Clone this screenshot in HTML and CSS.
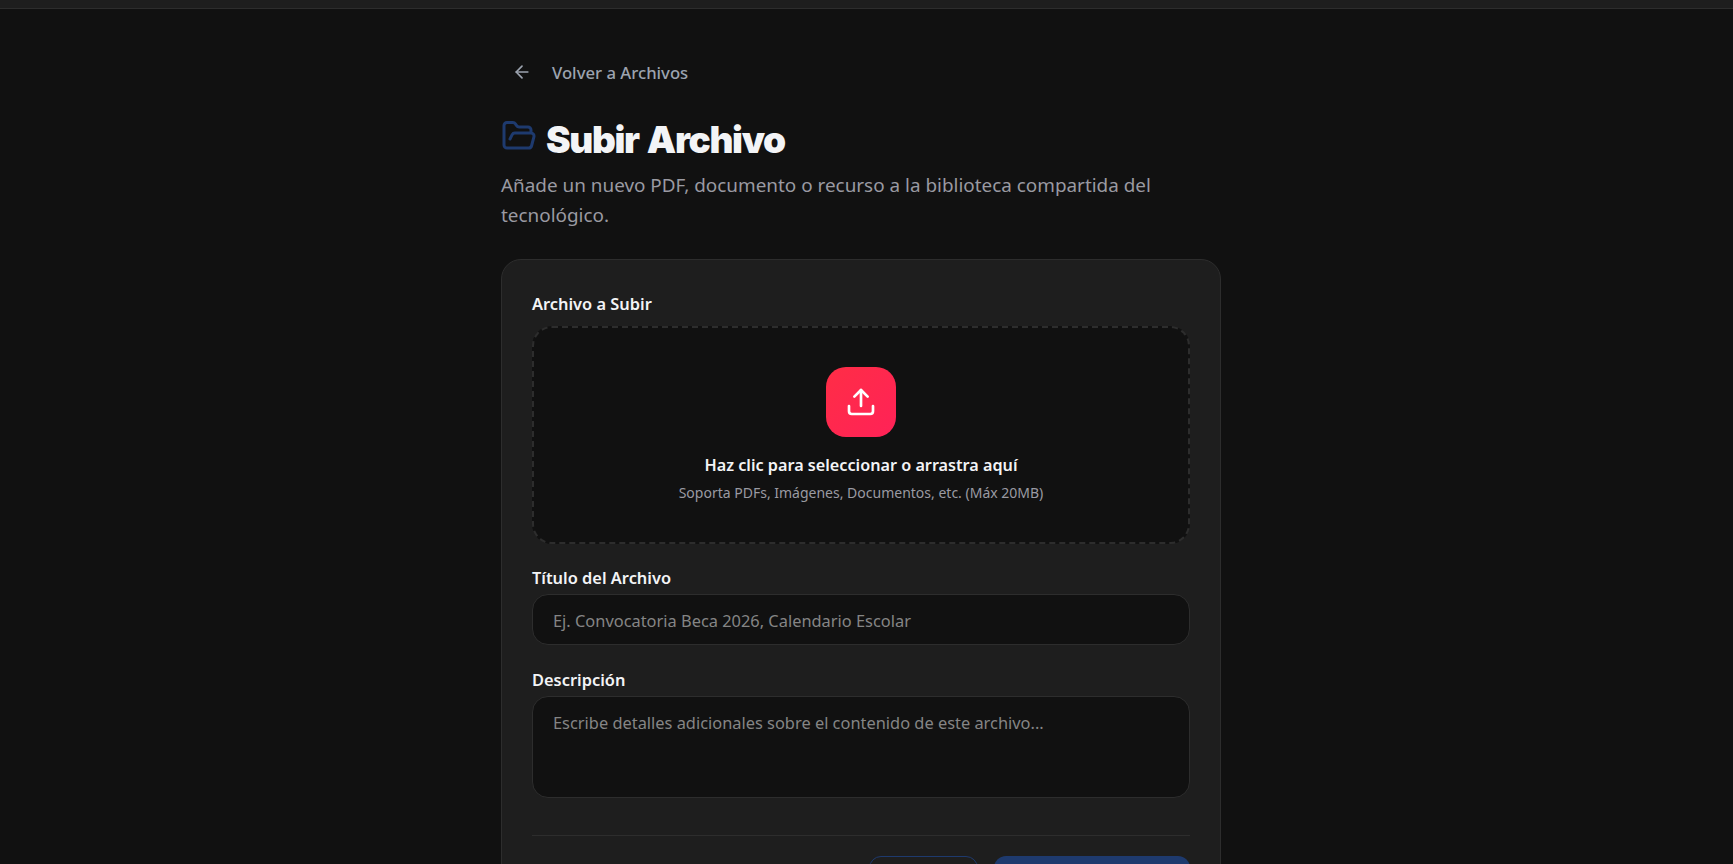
FILE: index.html
```html
<!DOCTYPE html>
<html lang="es">
<head>
<meta charset="utf-8">
<title>Subir Archivo</title>
<link rel="stylesheet" href="styles.css">
</head>
<body>
<div class="topbar"></div>
<main class="page">
  <a class="back" href="#">
    <svg class="back-icon" viewBox="0 0 24 24" fill="none" stroke="currentColor" stroke-width="2" stroke-linecap="round" stroke-linejoin="round"><path d="m12 19-7-7 7-7"/><path d="M19 12H5"/></svg>
    <span>Volver a Archivos</span>
  </a>
  <h1 class="title">
    <svg class="folder" viewBox="0 0 24 24" fill="none" stroke="currentColor" stroke-width="2" stroke-linecap="round" stroke-linejoin="round"><path d="m6 14 1.45-2.9A2 2 0 0 1 9.24 10H20a2 2 0 0 1 1.94 2.5l-1.55 6a2 2 0 0 1-1.94 1.5H4a2 2 0 0 1-2-2V5c0-1.1.9-2 2-2h3.93a2 2 0 0 1 1.66.9l.82 1.2a2 2 0 0 0 1.66.9H18a2 2 0 0 1 2 2v2"/></svg>
    <span>Subir Archivo</span>
  </h1>
  <p class="subtitle">Añade un nuevo PDF, documento o recurso a la biblioteca compartida del tecnológico.</p>
  <form class="card">
    <label class="label label-drop">Archivo a Subir</label>
    <div class="drop">
      <div class="drop-icon">
        <svg viewBox="0 0 24 24" fill="none" stroke="currentColor" stroke-width="2" stroke-linecap="round" stroke-linejoin="round"><path d="M21 15v4a2 2 0 0 1-2 2H5a2 2 0 0 1-2-2v-4"/><polyline points="17 8 12 3 7 8"/><line x1="12" x2="12" y1="3" y2="15"/></svg>
      </div>
      <div class="drop-title">Haz clic para seleccionar o arrastra aquí</div>
      <div class="drop-sub">Soporta PDFs, Imágenes, Documentos, etc. (Máx 20MB)</div>
    </div>
    <label class="label">Título del Archivo</label>
    <input class="field" type="text" placeholder="Ej. Convocatoria Beca 2026, Calendario Escolar">
    <label class="label">Descripción</label>
    <textarea class="field area" placeholder="Escribe detalles adicionales sobre el contenido de este archivo..."></textarea>
    <div class="actions">
      <button class="btn ghost" type="button">Cancelar</button>
      <button class="btn primary" type="button">Subir Archivo</button>
    </div>
  </form>
</main>
</body>
</html>
```
FILE: styles.css
```css
* { box-sizing: border-box; }
body {
  margin: 0;
  height: 864px;
  overflow: hidden;
  background: #111111;
  font-family: "Noto Sans", "Open Sans", sans-serif;
  color: #f3f4f6;
}
.topbar {
  height: 9px;
  background: #1e1e1e;
  border-bottom: 1px solid #2d2d2d;
}
.page {
  width: 720px;
  margin-left: calc(50% - 365.5px);
  padding-top: 47px;
}
.back {
  display: inline-flex;
  align-items: center;
  gap: 20px;
  height: 32px;
  padding-left: 11px;
  color: #9ca3af;
  text-decoration: none;
  font-size: 16.7px;
  font-weight: 500;
}
.back-icon { width: 20px; height: 20px; }
.title {
  display: flex;
  align-items: center;
  gap: 9px;
  margin: 21px 0 0;
  height: 60px;
  font-family: Inter, Roboto, sans-serif;
  font-size: 37px;
  font-weight: 900;
  letter-spacing: -1.35px;
  word-spacing: 2px;
  color: #f3f4f6;
}
.folder { width: 36px; height: 36px; color: #1e3a6e; position: relative; top: -3px; }
.subtitle {
  margin: 1px 0 0;
  font-size: 18.9px;
  line-height: 30px;
  color: #9a9aa2;
}
.card {
  margin-top: 29px;
  background: #1e1e1e;
  border: 1px solid #2d2d2d;
  border-radius: 20px;
  padding: 32px 30px 30px;
  display: flex;
  flex-direction: column;
}
.label {
  font-size: 16.4px;
  font-weight: 600;
  line-height: 24px;
  color: #f3f4f6;
  margin-bottom: 4px;
}
.label-drop { margin-bottom: 10px; }
.drop {
  height: 218px;
  background: #111111;
  border: 2px dashed #2d2d2d;
  border-radius: 20px;
  display: flex;
  flex-direction: column;
  align-items: center;
  margin-bottom: 22px;
}
.drop-icon {
  width: 70px;
  height: 70px;
  margin-top: 39px;
  border-radius: 20px;
  background: linear-gradient(135deg, #ff2d46, #ff2257);
  color: #fff;
  display: flex;
  align-items: center;
  justify-content: center;
}
.drop-icon svg { width: 32px; height: 32px; }
.drop-title { margin-top: 16px; font-size: 16.2px; font-weight: 600; color: #f3f4f6; line-height: 24px; }
.drop-sub { margin-top: 6px; font-size: 14px; color: #9a9aa2; line-height: 20px; }
.field {
  display: block;
  width: 100%;
  height: 51px;
  margin-bottom: 23px;
  padding: 15px 20px 13px;
  background: #111111;
  border: 1px solid #2d2d2d;
  border-radius: 16px;
  color: #f3f4f6;
  font-family: inherit;
  font-size: 16.4px;
  line-height: 22px;
  outline: none;
  resize: none;
}
.field::placeholder { color: #858585; opacity: 1; }
.area { height: 102px; margin-bottom: 37px; }
.actions {
  display: flex;
  justify-content: flex-end;
  gap: 16px;
  border-top: 1px solid #2d2d2d;
  padding-top: 20px;
}
.btn {
  height: 48px;
  border-radius: 12px;
  font-family: inherit;
  font-size: 16px;
  font-weight: 600;
  color: #f3f4f6;
}
.ghost { width: 109px; background: transparent; border: 1px solid #1e3a6e; }
.primary { width: 196px; background: #1e3a6e; border: none; }
```
